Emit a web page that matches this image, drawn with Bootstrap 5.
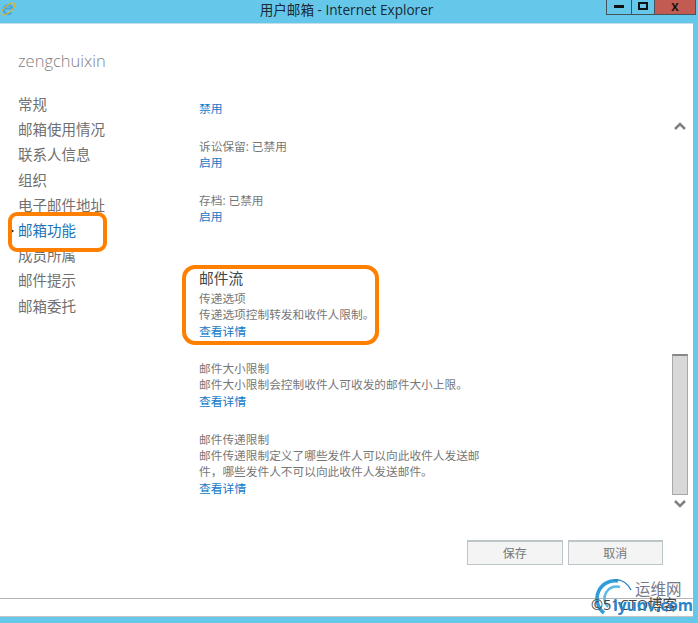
<!DOCTYPE html>
<html lang="zh">
<head>
<meta charset="utf-8">
<title>用户邮箱 - Internet Explorer</title>
<link href="https://cdn.jsdelivr.net/npm/bootstrap@5.3.0/dist/css/bootstrap.min.css" rel="stylesheet">
<style>
html,body{height:623px;overflow:hidden;background:#65c8ea}
body{font-family:"Open Sans","Noto Sans CJK SC",sans-serif;color:#666;position:relative}
.win{width:698px;height:623px}
.tbar{height:23px;background:#65c8ea;position:relative;color:#1c2a33;font-size:13.6px;line-height:19px}
.tbar-title{padding-right:5px}
.ie-ico{position:absolute;left:0;top:0}
.wbtns{position:absolute;left:606px;top:-1px;height:16px;border:1px solid #44545c;border-top:0}
.wb{display:flex;align-items:center;justify-content:center;height:15px}
.wb-min{width:25px;border-right:1px solid #44545c}
.wb-max{width:23px;border-right:1px solid #44545c}
.wb-close{width:40px;background:#c25b52;font-size:11px;font-weight:700;color:#111;line-height:14px}
.pane{width:693px;height:575px;background:#fff;border-top:1px solid #c4dde8;position:relative}
.side{width:199px;padding-left:18px;flex:none}
.acct{font-size:16.5px;font-weight:300;color:#808080;line-height:22px;padding-top:26px;margin-bottom:20px}
.side-item{font-size:14.5px;line-height:25.2px;height:25.2px;color:#707070;position:relative;white-space:nowrap}
.side-item.on{color:#1a74b8}
.side-item.on::before{content:"";position:absolute;left:-8px;top:10px;border:3px solid transparent;border-left:4px solid #222}
.body-col{width:288px;height:476px;overflow:hidden;font-size:11.7px;line-height:16px;color:#777;position:relative;padding-top:79px}
.lnk{color:#1279c8;display:block;font-size:11.8px;line-height:16px}
.lnk-gap{margin-top:1px}
.blk-a{margin-top:35px;margin-bottom:22px}
.blk-b{margin-bottom:44px}
.blk-c{margin-bottom:21px}
.blk-d{margin-bottom:22px}
.cut{position:absolute;left:0;top:0;width:100%;height:80px;background:#fff}
.cutlnk{position:absolute;left:0;top:76px}
.sec-h{font-size:14.7px;line-height:20px;color:#444;margin-bottom:2px}
.scroll-col{position:absolute;left:672px;top:93px;width:17px}
.chev{display:block;position:absolute;left:1px}
.chev-up{top:4px}
.chev-dn{top:382px}
.thumb{position:absolute;left:0;top:237px;width:16px;height:141px;background:#d8d8d8;border:1px solid #a8a8a8;border-top:2px solid #888}
.foot{position:absolute;left:467px;top:516px;gap:5px}
.mbtn{width:95.5px;height:25px;padding:0;border:1px solid #bcc6c8;border-radius:0;background:#f4f4f4;color:#777;font-size:12px;line-height:21px;border-width:2px 1px 1px}
.status{position:absolute;left:0;top:574px;width:693px;height:19px;background:#fff;border-top:1px solid #b4b4b4;border-bottom:1px solid #c4c4c4}
.hl{position:absolute;border:4px solid #ff7f00;z-index:3;pointer-events:none}
.hl-a{left:8px;top:188px;width:99px;height:40px;border-radius:9px}
.hl-b{left:182px;top:241px;width:197px;height:80px;border-radius:13px}
.wm{position:absolute;left:590px;top:575px;width:108px;height:48px;z-index:4;overflow:hidden}
.wm-logo{position:absolute;left:2px;top:0}
.wm-a{position:absolute;left:45px;top:6px;font-size:15.5px;line-height:16px;color:#778}
.wm-b{position:absolute;left:1px;top:22px;font-size:14.5px;line-height:16px;color:#444;white-space:nowrap}
.wm-c{position:absolute;left:23px;top:21px;font-size:15.5px;line-height:18px;font-weight:700;color:#2a86c8;white-space:nowrap}
</style>
</head>
<body>
<div class="win">
  <div class="tbar text-center">
    <svg class="ie-ico" width="16" height="17" viewBox="0 0 16 17"><path d="M3.500 8.500H12.500A4.500 4.500 0 1 0 11.500 12.500" fill="none" stroke="#4ba4dc" stroke-width="2.200"/><ellipse cx="8" cy="9" rx="8.500" ry="3.500" transform="rotate(-40 8 9)" fill="none" stroke="#e6b422" stroke-width="1"/></svg>
    <div class="tbar-title">用户邮箱 - Internet Explorer</div>
    <div class="wbtns d-flex">
      <div class="wb wb-min"><svg width="10" height="3"><rect width="10" height="3" fill="#111"/></svg></div>
      <div class="wb wb-max"><svg width="10" height="10"><rect x="1" y="1" width="8" height="6" fill="none" stroke="#111" stroke-width="2"/></svg></div>
      <div class="wb wb-close">X</div>
    </div>
  </div>
  <div class="pane d-flex">
    <div class="side">
      <div class="acct">zengchuixin</div>
      <div class="side-item">常规</div>
      <div class="side-item">邮箱使用情况</div>
      <div class="side-item">联系人信息</div>
      <div class="side-item">组织</div>
      <div class="side-item">电子邮件地址</div>
      <div class="side-item on">邮箱功能</div>
      <div class="side-item">成员所属</div>
      <div class="side-item">邮件提示</div>
      <div class="side-item">邮箱委托</div>
    </div>
    <div class="body-col">
      <div class="cutlnk lnk">禁用</div>
      <div class="cut"></div>
      <div class="blk-a"><div>诉讼保留: 已禁用</div><a class="lnk text-decoration-none">启用</a></div>
      <div class="blk-b"><div>存档: 已禁用</div><a class="lnk text-decoration-none">启用</a></div>
      <div class="blk-c"><div class="sec-h">邮件流</div><div>传递选项</div><div>传递选项控制转发和收件人限制。</div><a class="lnk lnk-gap text-decoration-none">查看详情</a></div>
      <div class="blk-d"><div>邮件大小限制</div><div>邮件大小限制会控制收件人可收发的邮件大小上限。</div><a class="lnk lnk-gap text-decoration-none">查看详情</a></div>
      <div><div>邮件传递限制</div><div>邮件传递限制定义了哪些发件人可以向此收件人发送邮件，哪些发件人不可以向此收件人发送邮件。</div><a class="lnk lnk-gap text-decoration-none">查看详情</a></div>
    </div>
    <div class="scroll-col">
      <svg class="chev chev-up" width="14" height="10" viewBox="0 0 14 10"><path d="M2 8l5-5 5 5" fill="none" stroke="#808080" stroke-width="2.500"/></svg>
      <div class="thumb"></div>
      <svg class="chev chev-dn" width="14" height="10" viewBox="0 0 14 10"><path d="M2 2l5 5 5-5" fill="none" stroke="#808080" stroke-width="2.500"/></svg>
    </div>
    <div class="foot d-flex">
      <button class="btn mbtn" type="button">保存</button>
      <button class="btn mbtn" type="button">取消</button>
    </div>
    <div class="status"></div>
    <div class="hl hl-a"></div>
    <div class="hl hl-b"></div>
  </div>
</div>
<div class="wm">
  <svg class="wm-logo" width="46" height="48" viewBox="0 0 46 48"><path d="M26 6A18 18 0 0 0 12 38" fill="none" stroke="#2f9ed8" stroke-width="3.500"/><path d="M28 12A12 12 0 0 0 16 32" fill="none" stroke="#5cb8e6" stroke-width="2.500"/><path d="M22 5c8-1 14 4 17 10" fill="none" stroke="#2f86c0" stroke-width="1.500"/></svg>
  <div class="wm-a">运维网</div>
  <div class="wm-b">©51CTO博客</div>
  <div class="wm-c">iyunv.com</div>
</div>
<script src="https://cdn.jsdelivr.net/npm/bootstrap@5.3.0/dist/js/bootstrap.bundle.min.js"></script>
</body>
</html>
